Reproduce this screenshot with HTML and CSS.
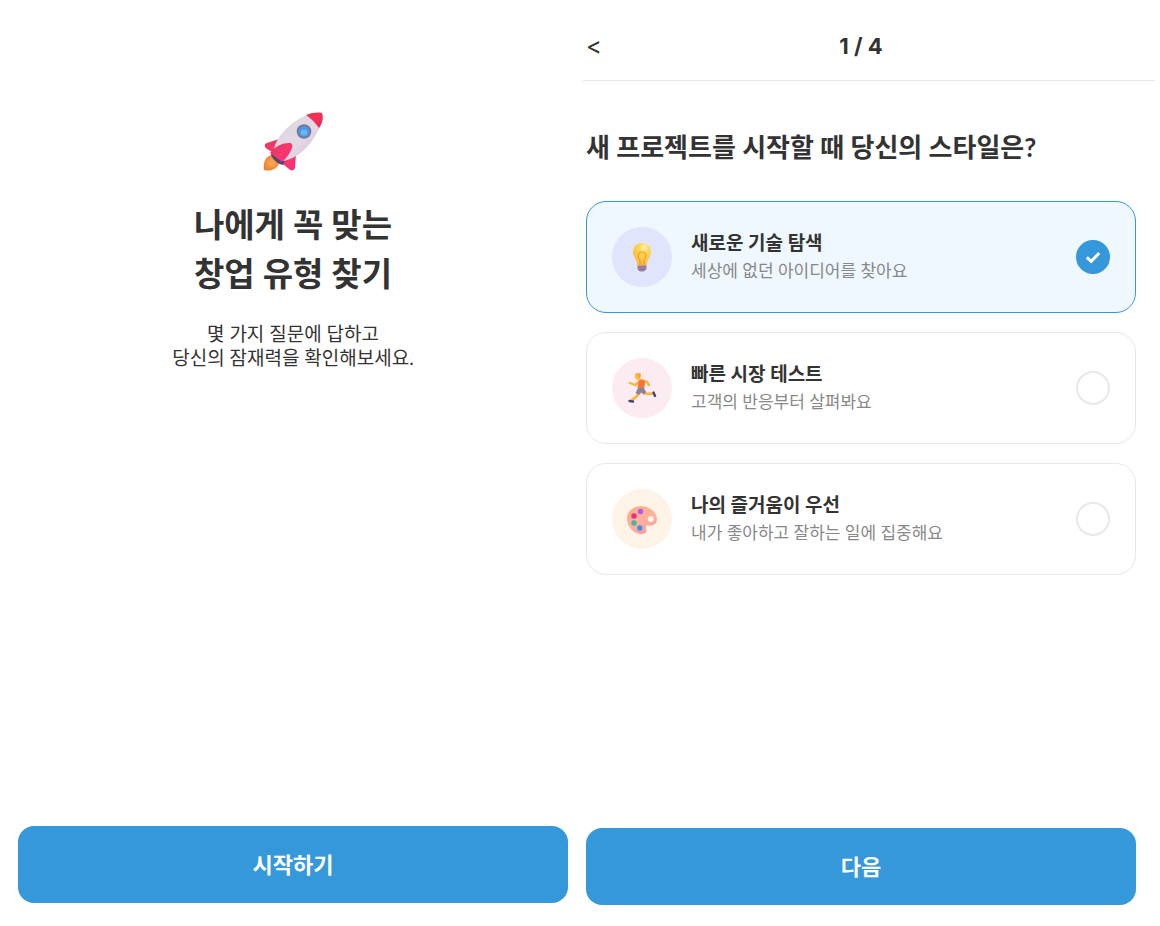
FILE: index.html
```html
<!DOCTYPE html>
<html lang="ko">
<head>
<meta charset="utf-8">
<meta name="viewport" content="width=device-width, initial-scale=1">
<title>창업 유형 찾기</title>
<link rel="stylesheet" href="styles.css">
</head>
<body>
<main class="screens">
  <section class="screen intro">
    <div class="intro-body">
      <svg class="rocket" viewBox="0 0 60 60" aria-hidden="true">
        <defs>
          <linearGradient id="hull" x1="0" y1="0" x2="1" y2="1"><stop offset="0.2" stop-color="#dcd5df"/><stop offset="0.55" stop-color="#e4dae6"/><stop offset="1" stop-color="#cdb6d3"/></linearGradient>
          <linearGradient id="nose" x1="0" y1="0" x2="1" y2="1"><stop offset="0" stop-color="#d93a50"/><stop offset="0.5" stop-color="#fb3158"/><stop offset="1" stop-color="#cf2857"/></linearGradient>
          <linearGradient id="fin" x1="0" y1="0" x2="1" y2="1"><stop offset="0" stop-color="#d63c59"/><stop offset="0.5" stop-color="#f8376c"/><stop offset="1" stop-color="#f52b83"/></linearGradient>
          <radialGradient id="flame"><stop offset="0" stop-color="#ffad4f"/><stop offset="1" stop-color="#ed8336"/></radialGradient>
        </defs>
        <path d="M8 43C2 45 0 51 1 58C8 60 14 57 17 50L13 45Z" fill="url(#flame)"/>
        <path d="M16 27L4 31C1 32 1 35 4 37L11 41L24 33Z" fill="url(#fin)"/>
        <path d="M33 42L32 56C31 59 28 59 26 57L16 49Z" fill="url(#fin)"/>
        <path d="M9 40L22 49L20 53C15 52 10 48 8 43Z" fill="#4c4775"/>
        <path d="M11 42C9 31 23 12 42 4C47 1 53 0 59 1C60 8 58 15 55 19C46 36 34 46 21 49Z" fill="url(#hull)"/>
        <path d="M43 3C49 0 57 0 59 1C61 6 59 12 56 16C53 12 49 7 43 3Z" fill="url(#nose)"/>
        <path d="M7 41C12 34 20 31 26 31C29 31 30 33 29 36C27 41 24 46 19 50Z" fill="url(#fin)"/>
        <circle cx="41" cy="19.500" r="7.300" fill="#7c7694"/>
        <circle cx="41" cy="19.500" r="5.300" fill="#449aef"/>
        <ellipse cx="41" cy="20.500" rx="3.400" ry="3" fill="#66b6fd"/>
      </svg>
      <h1 class="intro-title">나에게 꼭 맞는<br>창업 유형 찾기</h1>
      <p class="intro-text">몇 가지 질문에 답하고<br>당신의 잠재력을 확인해보세요.</p>
    </div>
    <button class="action" type="button">시작하기</button>
  </section>

  <section class="screen quiz">
    <header class="quiz-header">
      <button class="back" type="button" aria-label="이전">&lt;</button>
      <span class="progress">1 / 4</span>
    </header>
    <form class="quiz-body">
      <fieldset class="options">
        <legend class="question">새 프로젝트를 시작할 때 당신의 스타일은?</legend>
        <label class="option">
          <span class="badge badge-idea">
            <svg class="badge-icon" viewBox="0 0 30 30" aria-hidden="true">
              <defs><radialGradient id="bulb" cx="0.62" cy="0.2" r="0.8"><stop offset="0" stop-color="#fff6c6"/><stop offset="0.3" stop-color="#ffda52"/><stop offset="1" stop-color="#f8b63f"/></radialGradient></defs>
              <path d="M15 0C9.500 0 6 4 6 9C6 14 10 16 10.500 23H19.500C20 16 24 14 24 9C24 4 20.500 0 15 0Z" fill="url(#bulb)"/>
              <path d="M13 22V17C10 14 10.500 9 15 9C19.500 9 20 14 17 17V22" fill="none" stroke="#f49c30" stroke-width="1.200"/>
              <path d="M10.500 22.500H19.500V26L17 28.500H13L10.500 26Z" fill="#a48ba9"/>
              <path d="M11 24.500L19 23.500M11 27L19 26" stroke="#806b91" stroke-width="1"/>
            </svg>
          </span>
          <span class="option-copy"><span class="option-title">새로운 기술 탐색</span><span class="option-text">세상에 없던 아이디어를 찾아요</span></span>
          <span class="choice">
            <input class="radio" type="radio" name="style" checked>
            <svg class="tick" viewBox="0 0 34 34" aria-hidden="true"><path d="M10.800 17.400L15.200 21.400L23.200 13" fill="none" stroke="#fff" stroke-width="3"/></svg>
          </span>
        </label>
        <label class="option">
          <span class="badge badge-run">
            <svg class="badge-icon" viewBox="0 0 30 30" aria-hidden="true">
              <g fill="none" stroke-linecap="round" stroke-linejoin="round">
                <path d="M12 8L8 11L3 9M17 7L20 8L22 11" stroke="#fdb52c" stroke-width="2.400"/>
                <path d="M12 18L10 22L5 26M17 18L20 20L26 19.500" stroke="#fdb52c" stroke-width="2.600"/>
                <path d="M2.500 27L6 27.500M26.500 18.500L28 22" stroke="#47427c" stroke-width="2.400"/>
              </g>
              <path d="M12 6C15 4 18 6 18 9L17 15L10.500 14Z" fill="#fc7138"/>
              <path d="M11 14L17 14L19 18L17 21L14.500 18.500L12 21L8.500 19Z" fill="#8b839b"/>
              <path d="M8 0C9-1.500 13-1.500 14 0L13.500 5L11 6.500L8 4Z" fill="#fdbb38"/>
              <path d="M10 -0.500L14 0L13 4L11.500 3Z" fill="#f4a62d"/>
            </svg>
          </span>
          <span class="option-copy"><span class="option-title">빠른 시장 테스트</span><span class="option-text">고객의 반응부터 살펴봐요</span></span>
          <span class="choice">
            <input class="radio" type="radio" name="style">
            <svg class="tick" viewBox="0 0 34 34" aria-hidden="true"><path d="M10.800 17.400L15.200 21.400L23.200 13" fill="none" stroke="#fff" stroke-width="3"/></svg>
          </span>
        </label>
        <label class="option">
          <span class="badge badge-art">
            <svg class="badge-icon" viewBox="0 0 30 30" aria-hidden="true">
              <defs><linearGradient id="palette" x1="0" y1="0" x2="0.500" y2="1"><stop offset="0" stop-color="#f6b083"/><stop offset="0.600" stop-color="#ffb19f"/><stop offset="1" stop-color="#f99f9d"/></linearGradient></defs>
              <path fill-rule="evenodd" d="M12 1.500C21 0 30 7 30 14C30 20 25 21 20 20.500C17 21 22 27 17 28.500C12 31 0 25 0 14C0 7 5 2 12 1.500ZM23.700 11A3 3 0 1 0 23.700 17A3 3 0 1 0 23.700 11Z" fill="url(#palette)"/>
              <circle cx="13.500" cy="6.500" r="2.700" fill="#b25aef"/>
              <circle cx="7" cy="11" r="2.700" fill="#ee2c84"/>
              <circle cx="7" cy="18" r="2.700" fill="#40b5ac"/>
              <circle cx="12.800" cy="23" r="2.700" fill="#408fe7"/>
            </svg>
          </span>
          <span class="option-copy"><span class="option-title">나의 즐거움이 우선</span><span class="option-text">내가 좋아하고 잘하는 일에 집중해요</span></span>
          <span class="choice">
            <input class="radio" type="radio" name="style">
            <svg class="tick" viewBox="0 0 34 34" aria-hidden="true"><path d="M10.800 17.400L15.200 21.400L23.200 13" fill="none" stroke="#fff" stroke-width="3"/></svg>
          </span>
        </label>
      </fieldset>
      <button class="action" type="button">다음</button>
    </form>
  </section>
</main>
</body>
</html>
```
FILE: styles.css
```css
* { box-sizing: border-box; }
body {
  margin: 0;
  background: #fff;
  color: #333;
  font-family: Lato, "Noto Sans CJK KR", sans-serif;
}
button { font: inherit; color: inherit; border: 0; background: none; cursor: pointer; }
.screens {
  display: grid;
  grid-template-columns: 1fr 1fr;
  min-height: 100vh;
}
.screen { display: flex; flex-direction: column; min-width: 0; }

.intro { padding: 112px 12px 23px 18px; }
.intro-body { flex: 1; text-align: center; }
.rocket { display: block; width: 60px; height: 60px; margin: 0 auto 28px; }
.intro-title { margin: 0; font-size: 33px; line-height: 49px; font-weight: 700; }
.intro-text { margin: 24px 0 0; font-size: 19px; line-height: 24px; }

.action {
  width: 100%;
  padding: 22px;
  border-radius: 16px;
  background: #3498db;
  color: #fff;
  font-size: 22px;
  line-height: 33px;
  font-weight: 700;
}

.quiz { padding-bottom: 21px; }
.quiz-header {
  display: grid;
  grid-template-columns: 40px 1fr 40px;
  align-items: center;
  height: 81px;
  margin: 0 5px 0 3px;
  padding: 12px 19px 0 3px;
  border-bottom: 1px solid #e8e8e8;
}
.back { padding: 0; text-align: left; font-family: Inter, sans-serif; font-size: 24px; line-height: 32px; }
.progress { text-align: center; font-family: Inter, sans-serif; font-size: 22px; line-height: 32px; font-weight: 700; }
.quiz-body { display: flex; flex: 1; flex-direction: column; padding: 0 24px 0 6px; }
.options { display: flex; flex: 1; flex-direction: column; gap: 19px; min-width: 0; margin: 0; padding: 0; border: 0; }
.question { padding: 46px 0 34px; font-size: 26px; line-height: 40px; font-weight: 700; }
.option {
  display: flex;
  align-items: center;
  gap: 19px;
  padding: 25px;
  border: 1px solid #e8e8e8;
  border-radius: 20px;
  cursor: pointer;
}
.option:has(.radio:checked) { border-color: #3498db; background: #eff7ff; }
.badge { display: grid; place-items: center; flex: none; width: 60px; height: 60px; padding-top: 2px; border-radius: 50%; }
.badge-idea { background: #e0e4fd; }
.badge-run { background: #fdebf2; }
.badge-art { background: #fdf3e7; }
.badge-icon { width: 30px; height: 30px; overflow: visible; }
.option-copy { display: flex; flex: 1; flex-direction: column; min-width: 0; }
.option-title { font-size: 19px; line-height: 28px; font-weight: 700; }
.option-text { color: #888; font-size: 17px; line-height: 28px; }
.choice { display: grid; flex: none; }
.radio, .tick { grid-area: 1 / 1; width: 34px; height: 34px; margin: 0; }
.radio { appearance: none; border: 2px solid #e8e8e8; border-radius: 50%; background: #fff; }
.radio:checked { border-color: #3498db; background: #3498db; }
.tick { visibility: hidden; pointer-events: none; }
.radio:checked + .tick { visibility: visible; }
```
